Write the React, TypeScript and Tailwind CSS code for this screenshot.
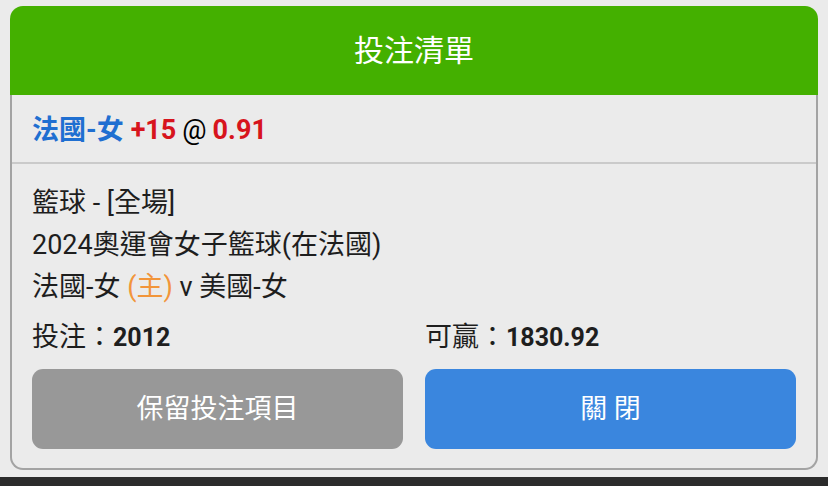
export default function App() {
  const font = { fontFamily: '"Roboto", "Noto Sans CJK TC", sans-serif' };
  return (
    <div className="w-[828px] h-[486px] bg-[#ebebeb] flex flex-col overflow-hidden" style={font}>
      <div className="px-[10px] pt-[6px]">
        <div className="h-[89px] bg-[#44b000] rounded-t-[13px] flex items-center justify-center">
          <span className="text-[30px] text-white leading-none">投注清單</span>
        </div>
        <div className="bg-[#ebebeb] border-x-2 border-b-2 border-[#a3a3a3] rounded-b-[13px]">
          <div className="h-[69px] flex items-center pt-[3px] px-[20px] text-[27px] font-bold border-b-2 border-[#cacaca]">
            <span className="text-[#1f6fd1]">法國-女</span>
            <span className="text-[#d7141d] ml-[7px]">+15</span>
            <span className="text-black font-normal ml-[6px]">@</span>
            <span className="text-[#d7141d] ml-[6px]">0.91</span>
          </div>
          <div className="px-[20px] pt-[18px] pb-[19px] text-[#1e1e1e]">
            <div className="text-[27px] leading-[42px]">籃球 - [全場]</div>
            <div className="text-[27px] leading-[42px]">2024奧運會女子籃球(在法國)</div>
            <div className="text-[27px] leading-[42px]">
              法國-女 <span className="text-[#f2953a]">(主)</span> v 美國-女
            </div>
            <div className="mt-[8px] grid grid-cols-2 gap-[22px] leading-[42px]">
              <div>
                <span className="text-[27px]">投注：</span>
                <span className="text-[25px] font-bold">2012</span>
              </div>
              <div>
                <span className="text-[27px]">可贏：</span>
                <span className="text-[25px] font-bold">1830.92</span>
              </div>
            </div>
            <div className="mt-[7px] grid grid-cols-2 gap-[22px]">
              <button className="h-[80px] rounded-[11px] bg-[#989898] text-white text-[27px] flex items-center justify-center">
                保留投注項目
              </button>
              <button className="h-[80px] rounded-[11px] bg-[#3a86de] text-white text-[27px] flex items-center justify-center">
                關 閉
              </button>
            </div>
          </div>
        </div>
      </div>
      <div className="flex-1" />
      <div className="h-[9px] bg-[#2b2b2b]" />
    </div>
  );
}
